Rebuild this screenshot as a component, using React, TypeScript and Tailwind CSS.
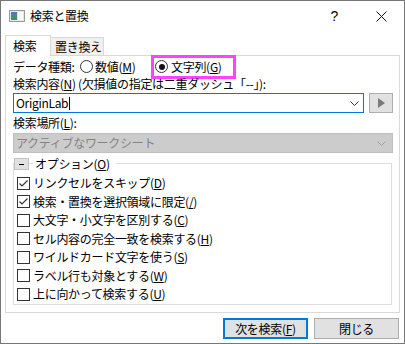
import React from "react";

const OPTIONS = [
  { label: "リンクセルをスキップ", key: "D", checked: true },
  { label: "検索・置換を選択領域に限定", key: "/", checked: true },
  { label: "大文字・小文字を区別する", key: "C", checked: false },
  { label: "セル内容の完全一致を検索する", key: "H", checked: false },
  { label: "ワイルドカード文字を使う", key: "S", checked: false },
  { label: "ラベル行も対象とする", key: "W", checked: false },
  { label: "上に向かって検索する", key: "U", checked: false },
];

// access key like (D) with the letter underlined
function Key({ k }: { k: string }) {
  return (
    <>
      (<span className="underline underline-offset-[1px]">{k}</span>)
    </>
  );
}

function Chevron({ color }: { color: string }) {
  return (
    <svg width="9" height="5" viewBox="0 0 9 5" className="shrink-0">
      <polyline points="0.5,0.5 4.5,4.5 8.5,0.5" fill="none" stroke={color} strokeWidth="1" />
    </svg>
  );
}

function Radio({ on }: { on: boolean }) {
  return (
    <span className="w-[13px] h-[13px] rounded-full border border-[#333] bg-white flex items-center justify-center shrink-0">
      {on && <span className="w-[6px] h-[6px] rounded-full bg-[#111]" />}
    </span>
  );
}

function Check({ on }: { on: boolean }) {
  return (
    <span className="w-[13px] h-[13px] border border-[#333] bg-white flex items-center justify-center shrink-0">
      {on && (
        <svg width="11" height="11" viewBox="0 0 11 11">
          <polyline points="1.5,5.5 4,8 9.5,2.5" fill="none" stroke="#333" strokeWidth="1.2" />
        </svg>
      )}
    </span>
  );
}

export default function App() {
  return (
    <div className="w-[405px] h-[344px] border border-[#777] bg-white flex flex-col text-[12px] text-black font-['Noto_Sans_CJK_JP',sans-serif] leading-none whitespace-nowrap tracking-[-0.3px]">
      {/* title bar */}
      <div className="h-[30px] flex items-center pl-[8px] pr-[17px]">
        <svg width="16" height="12" viewBox="0 0 16 12" className="shrink-0">
          <rect x="0.5" y="0.5" width="15" height="11" fill="#e8e8e8" stroke="#9a9a9a" />
          <rect x="2" y="2" width="6" height="8" fill="#3f8f7c" />
          <rect x="2" y="2" width="6" height="3" fill="#4a7fb5" />
          <rect x="9" y="2" width="5" height="8" fill="#fafafa" />
        </svg>
        <span className="ml-[5px] flex-1">検索と置換</span>
        <span className="text-[14px] font-['Liberation_Sans',sans-serif]">?</span>
        <svg width="11" height="11" viewBox="0 0 11 11" className="ml-[38px]">
          <path d="M0.5 0.5 L10.5 10.5 M10.5 0.5 L0.5 10.5" stroke="#111" strokeWidth="1" />
        </svg>
      </div>

      {/* tabs */}
      <div className="mt-[4px] ml-[4px] flex items-end">
        <div className="relative z-10 -mb-px h-[21px] w-[46px] bg-white border-l border-t border-r border-[#d9d9d9] pl-[7px] flex items-center">
          検索
        </div>
        <div className="h-[18px] w-[53px] bg-[#f0f0f0] border-t border-r border-[#d9d9d9] pl-[4px] flex items-center">
          置き換え
        </div>
      </div>

      {/* tab panel */}
      <div className="mx-[4px] h-[258px] border border-[#d9d9d9] pl-[7px] pr-[6px] flex flex-col">
        <div className="h-[21px] flex items-center">
          <span className="w-[67px]">データ種類:</span>
          <span className="w-[71px] flex items-center gap-[2px]">
            <Radio on={false} />
            <span>
              数値<Key k="M" />
            </span>
          </span>
          <span className="h-[24px] w-[85px] border-[3px] border-[#ff44ff] flex items-center pl-[1px] gap-[3px]">
            <Radio on={true} />
            <span>
              文字列<Key k="G" />
            </span>
          </span>
        </div>
        <div className="h-[14px] flex items-center">
          検索内容<Key k="N" /> (欠損値の指定は二重ダッシュ「--」):
        </div>

        <div className="mt-[2px] h-[20px] flex gap-[5px]">
          <div className="w-[351px] h-full border border-[#0078d7] flex items-center pl-[2px] pr-[4px]">
            <span className="flex-1 flex items-center">
              OriginLab<span className="ml-px w-px h-[13px] bg-black" />
            </span>
            <Chevron color="#333" />
          </div>
          <div className="w-[24px] h-full border border-[#adadad] bg-[#e1e1e1] flex items-center justify-center">
            <svg width="7" height="10" viewBox="0 0 7 10">
              <polygon points="0,0 7,5 0,10" fill="#7a7a7a" />
            </svg>
          </div>
        </div>

        <div className="h-[20px] flex items-center">
          検索場所<Key k="L" />:
        </div>
        <div className="h-[20px] border border-[#bfbfbf] bg-[#cccccc] flex items-center pl-[2px] pr-[6px] text-[#838383]">
          <span className="flex-1">アクティブなワークシート</span>
          <Chevron color="#a0a0a0" />
        </div>

        {/* options group */}
        <div className="mt-[10px] w-[379px] border border-[#dcdcdc] flex flex-col">
          <div className="-mt-[6px] h-[12px] flex items-center">
            <span className="w-[15px] h-[12px] bg-[#e1e1e1] border border-[#c4c4c4] flex items-center justify-center">
              <span className="w-[5px] h-px bg-black" />
            </span>
            <span className="ml-[4px] bg-white pl-[2px] pr-[6px]">
              オプション<Key k="O" />
            </span>
          </div>
          <div className="mt-[4px] flex flex-col">
            {OPTIONS.map((o) => (
              <div key={o.key} className="h-[18.5px] flex items-center pl-[3px] gap-[3px]">
                <Check on={o.checked} />
                <span>
                  {o.label}
                  <Key k={o.key} />
                </span>
              </div>
            ))}
          </div>
        </div>
      </div>

      {/* buttons */}
      <div className="mt-[5px] pr-[5px] flex justify-end gap-[6px]">
        <button className="w-[85px] h-[21px] border-2 border-[#0078d7] bg-[#e1e1e1] flex items-center justify-center">
          次を検索<Key k="F" />
        </button>
        <button className="w-[85px] h-[21px] border border-[#adadad] bg-[#e1e1e1] flex items-center justify-center">
          閉じる
        </button>
      </div>
    </div>
  );
}
